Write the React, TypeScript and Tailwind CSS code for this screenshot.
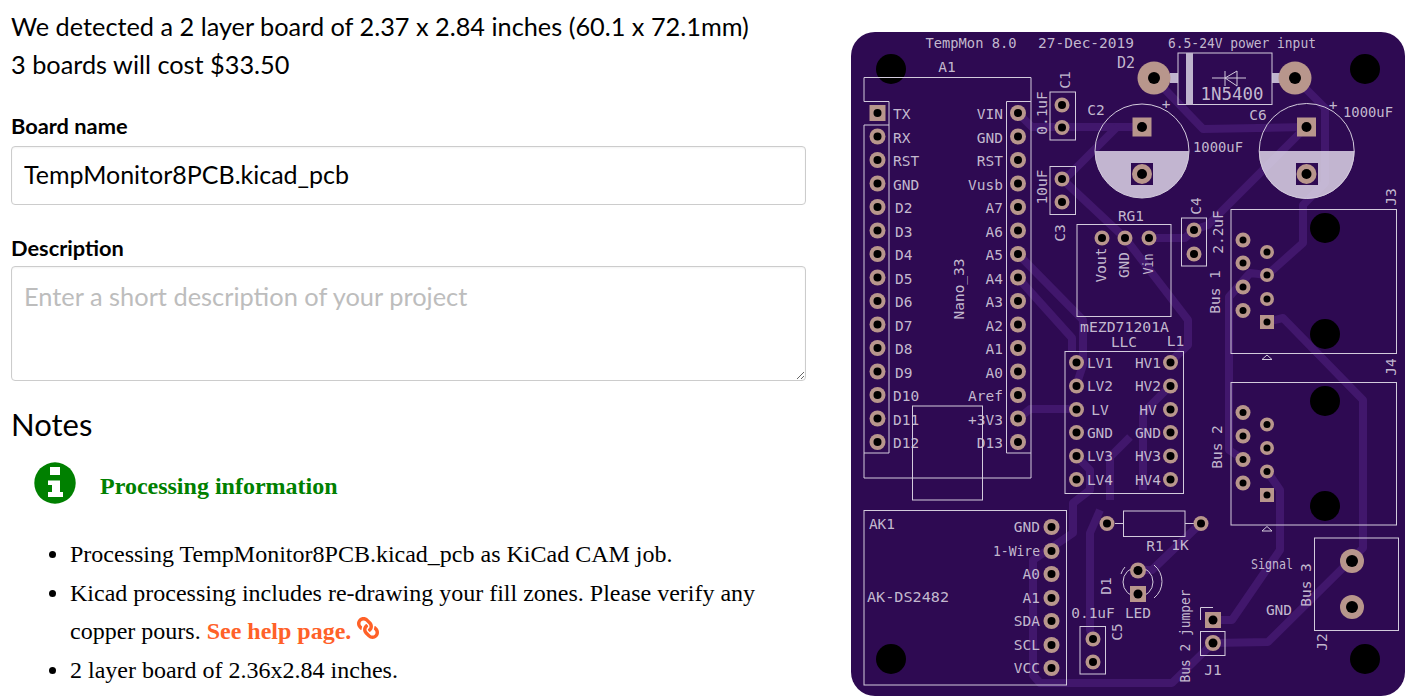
import React from "react";
import { FaLink } from "react-icons/fa";

const SILK = "#d3cbdc";
const PAD = "#b8968c";
const TRACE = "#41176c";
const BG = "#2e0a52";

function T({ x, y, c, a = "middle", r, s = 14.5, w }: { x: number; y: number; c: string; a?: "start" | "middle" | "end"; r?: boolean; s?: number; w?: number }) {
  return (
    <text x={x} y={y} textAnchor={a} dominantBaseline="central" fontSize={s} fill={SILK} fillOpacity={0.92} fontFamily="'DejaVu Sans Mono', monospace" textLength={w} lengthAdjust={w ? "spacingAndGlyphs" : undefined} transform={r ? `rotate(-90 ${x} ${y})` : undefined}>
      {c}
    </text>
  );
}
function P({ x, y, r = 8, h = 4, sq }: { x: number; y: number; r?: number; h?: number; sq?: boolean }) {
  return (
    <g>
      {sq ? <rect x={x - r} y={y - r} width={r * 2} height={r * 2} fill={PAD} /> : <circle cx={x} cy={y} r={r} fill={PAD} />}
      <circle cx={x} cy={y} r={h} fill="#000" />
    </g>
  );
}
function R({ x, y, x2, y2 }: { x: number; y: number; x2: number; y2: number }) {
  return <rect x={x} y={y} width={x2 - x} height={y2 - y} fill="none" stroke={SILK} strokeWidth={1} />;
}
function H({ x, y }: { x: number; y: number }) {
  return <circle cx={x} cy={y} r={15} fill="#000" />;
}

const traces = [
  "1018,113 1032,127 1142,127",
  "1117,127 1070,174 1062,179",
  "1062,179 1125,238",
  "1125,238 1188,320 1188,345 1170,362",
  "1018,254 1083,320 1083,365 1076,386",
  "1018,278 1072,338 1072,351",
  "1018,419 1030,409 1076,409",
  "1154,78 1203,129 1306,127",
  "1306,127 1208,225 1194,230",
  "1149,238 1185,238 1194,230",
  "1295,78 1325,108 1325,183 1303,205 1303,243 1267,275 1250,273 1229,297 1229,450 1243,459",
  "1170,386 1143,413 1143,490",
  "1130,437 1110,457 1110,500",
  "1267,322 1283,318 1363,400 1363,548 1268,642 1213,643 1172,683 1040,683 1033,675 1033,560 1073,533 1073,503 1090,490 1090,470 1076,456",
  "1213,620 1232,620 1280,550 1280,490 1267,471",
  "1201,523 1152,570 1138,570",
  "1100,510 1090,533 1090,630 1093,639",
];

const leftY = Array.from({ length: 15 }, (_, i) => 113 + i * 23.5);
const leftL = ["TX", "RX", "RST", "GND", "D2", "D3", "D4", "D5", "D6", "D7", "D8", "D9", "D10", "D11", "D12"];
const rightL = ["VIN", "GND", "RST", "Vusb", "A7", "A6", "A5", "A4", "A3", "A2", "A1", "A0", "Aref", "+3V3", "D13"];
const llcY = [362.5, 386, 409.5, 432.5, 456, 479.5];
const llcL = ["LV1", "LV2", "LV", "GND", "LV3", "LV4"];
const llcR = ["HV1", "HV2", "HV", "GND", "HV3", "HV4"];
const akY = [527, 551, 574, 598, 621, 645, 668];
const akL = ["GND", "1-Wire", "A0", "A1", "SDA", "SCL", "VCC"];

function Board() {
  return (
    <svg width={554} height={664} viewBox="851 32 554 664" className="block">
      <rect x={851} y={32} width={554} height={664} rx={24} fill={BG} />
      {traces.map((t) => (
        <polyline key={t} points={t} fill="none" stroke={TRACE} strokeWidth={8} strokeLinejoin="round" />
      ))}
      <H x={891} y={69} />
      <H x={1365} y={69} />
      <H x={891} y={659} />
      <H x={1365} y={659} />
      <H x={1325} y={228} />
      <H x={1325} y={334} />
      <H x={1325} y={401} />
      <H x={1325} y={506} />

      <T x={971} y={43} c="TempMon 8.0" w={91} />
      <T x={1086} y={43} c="27-Dec-2019" w={96} />
      <T x={1242} y={43} c="6.5-24V power input" w={148} />
      <T x={947} y={67} c="A1" />
      <T x={1126} y={63} c="D2" s={15} />

      <path d="M864 125V453M864 101.5V77.5H1031V478H864V453H889V101.5H864M864 125H889M1006.5 101.5H1031M1006.5 101.5V453H1031" fill="none" stroke={SILK} strokeWidth={1} />
      <R x={912.5} y={406} x2={982.5} y2={500} />
      {leftY.map((y, i) => (
        <g key={i}>
          <P x={877.5} y={y} sq={i === 0} />
          <P x={1018} y={y} />
          <T x={i > 3 && i < 12 ? 895 : 893} y={y + 1} c={leftL[i]} a="start" />
          <T x={1003} y={y + 1} c={rightL[i]} a="end" />
        </g>
      ))}
      <T x={959} y={289} c="Nano_33" r />

      <R x={1050} y={92} x2={1075.5} y2={140} />
      <R x={1050} y={166.5} x2={1075.5} y2={214.5} />
      <P x={1062} y={105} r={7.5} />
      <P x={1062} y={127.5} r={7.5} />
      <P x={1062} y={179} r={7.5} />
      <P x={1062} y={202} r={7.5} />
      <T x={1065} y={80} c="C1" r />
      <T x={1042} y={113} c="0.1uF" r />
      <T x={1042} y={187} c="10uF" r />
      <T x={1060} y={233} c="C3" r />

      <path d="M1189 151A47 47 0 0 1 1095 151Z" fill="#dcd4e6" fillOpacity={0.85} />
      <circle cx={1142} cy={151} r={47} fill="none" stroke={SILK} strokeWidth={1} />
      <path d="M1354.5 151A47.5 47.5 0 0 1 1259 151Z" fill="#dcd4e6" fillOpacity={0.85} />
      <circle cx={1306.7} cy={151} r={47.5} fill="none" stroke={SILK} strokeWidth={1} />
      <rect x={1131} y={163} width={22} height={22} fill={BG} />
      <rect x={1296} y={163} width={22} height={22} fill={BG} />
      <P x={1142} y={127} r={9.5} h={5} sq />
      <P x={1142} y={174} r={10} h={5} />
      <P x={1306.5} y={127} r={9.5} h={5} sq />
      <P x={1306.5} y={174} r={10} h={5} />
      <T x={1096} y={110} c="C2" />
      <T x={1258} y={115} c="C6" />
      <T x={1166} y={104} c="+" />
      <T x={1333} y={105} c="+" />
      <T x={1218} y={147} c="1000uF" w={50} />
      <T x={1368} y={112} c="1000uF" w={50} />

      <rect x={1170} y={73} width={8} height={10} fill="#bfb4cd" />
      <rect x={1272} y={73} width={8} height={10} fill="#bfb4cd" />
      <R x={1178} y={53} x2={1272} y2={104.5} />
      <rect x={1186} y={53} width={7} height={51.5} fill="#bfb4cd" />
      <path d="M1212 78H1246M1225 71V86M1225 78L1237 71V86Z" fill="none" stroke={SILK} strokeWidth={1} />
      <T x={1232} y={94} c="1N5400" s={17} w={63} />
      <P x={1154} y={78} r={16.5} h={6} />
      <P x={1295} y={78} r={16.5} h={6} />

      <R x={1077} y={224.5} x2={1171} y2={316.5} />
      <P x={1102} y={238} r={7.5} />
      <P x={1125} y={238} r={7.5} />
      <P x={1149} y={238} r={7.5} />
      <T x={1101} y={265} c="Vout" r />
      <T x={1124} y={265} c="GND" r />
      <T x={1148} y={264} c="Vin" r w={21} />
      <T x={1131} y={216} c="RG1" />
      <T x={1124.5} y={327} c="mEZD71201A" w={89} />
      <T x={1124} y={342} c="LLC" />
      <T x={1175.5} y={341} c="L1" />

      <R x={1181.5} y={218} x2={1206.5} y2={266} />
      <P x={1194} y={230} r={7.5} />
      <P x={1194} y={254} r={7.5} />
      <T x={1196} y={206} c="C4" r />
      <T x={1218} y={232} c="2.2uF" r />

      <R x={1065} y={351.5} x2={1183.5} y2={493.5} />
      {llcY.map((y, i) => (
        <g key={i}>
          <P x={1076.5} y={y} r={7.5} />
          <P x={1170.5} y={y} r={7.5} />
          <T x={1100} y={y} c={llcL[i]} />
          <T x={1148} y={y} c={llcR[i]} />
        </g>
      ))}

      <R x={1231} y={209.5} x2={1396.5} y2={353.5} />
      <R x={1231} y={382.5} x2={1396.5} y2={525} />
      {[240, 263, 287, 310.5].map((y) => <P key={y} x={1243} y={y} r={7.5} h={3.5} />)}
      {[252, 275, 299].map((y) => <P key={y} x={1267} y={y} r={7} h={3.5} />)}
      <P x={1267} y={322} r={7} h={3.5} sq />
      {[412.5, 436, 459.5, 483].map((y) => <P key={y} x={1243} y={y} r={7.5} h={3.5} />)}
      {[424.5, 448, 471.5].map((y) => <P key={y} x={1267} y={y} r={7} h={3.5} />)}
      <P x={1267} y={495} r={7} h={3.5} sq />
      <path d="M1262 359.5H1272L1267 355ZM1262 531H1272L1267 526.5Z" fill="none" stroke={SILK} strokeWidth={1} />
      <T x={1391} y={197} c="J3" r />
      <T x={1391} y={367} c="J4" r />
      <T x={1215} y={292} c="Bus 1" r />
      <T x={1217} y={447} c="Bus 2" r />

      <R x={864} y={510.5} x2={1066.5} y2={685} />
      {akY.map((y, i) => (
        <g key={i}>
          <P x={1051.5} y={y} />
          <T x={1040} y={y} c={akL[i]} a="end" w={i === 1 ? 47 : undefined} />
        </g>
      ))}
      <T x={882} y={524} c="AK1" />
      <T x={908} y={597} c="AK-DS2482" w={82} />

      <path d="M1115 523.5H1124M1185 523.5H1194" stroke={SILK} strokeWidth={1} />
      <R x={1123.5} y={511} x2={1185} y2={536.5} />
      <P x={1107} y={523.5} r={7.5} />
      <P x={1201} y={523.5} r={7.5} />
      <T x={1155} y={546} c="R1" />
      <T x={1180} y={545} c="1K" />

      <path d="M1121 574A18 18 0 0 1 1125 567M1154 565A21 21 0 0 1 1154 598" fill="none" stroke={SILK} strokeWidth={1} />
      <circle cx={1138} cy={582} r={15} fill="none" stroke={SILK} strokeWidth={1} />
      <P x={1138} y={570.5} r={8} h={4.5} />
      <P x={1138} y={594} r={8} h={4.5} sq />
      <T x={1106} y={586} c="D1" r />
      <T x={1138} y={613} c="LED" />

      <R x={1080} y={626.5} x2={1105.5} y2={674} />
      <P x={1093} y={639} r={7.5} />
      <P x={1093} y={662} r={7.5} />
      <T x={1093} y={613} c="0.1uF" />
      <T x={1117} y={632} c="C5" r />

      <R x={1314.5} y={538} x2={1398.5} y2={630.5} />
      <P x={1352} y={561} r={12} h={6} />
      <P x={1352} y={607} r={12} h={6} />
      <T x={1272} y={564} c="Signal" w={42} />
      <T x={1279} y={610} c="GND" />
      <T x={1306} y={585} c="Bus 3" r />
      <T x={1322} y={642} c="J2" r />

      <path d="M1200.5 620V607.5H1213" fill="none" stroke={SILK} strokeWidth={1} />
      <R x={1200.5} y={631.5} x2={1225} y2={655.5} />
      <P x={1213} y={620} r={8} h={4.5} sq />
      <P x={1213} y={643} r={8} h={4.5} />
      <T x={1213} y={670} c="J1" />
      <T x={1185} y={636} c="Bus 2 jumper" r w={93} />
    </svg>
  );
}

function InfoIcon() {
  return (
    <svg width={42} height={42} viewBox="0 0 42 42" className="shrink-0">
      <circle cx={21} cy={21} r={20.7} fill="#008000" />
      <path d="M16 5H26V13H16ZM14 18.5H26V30H29V35H14V30H18V23H14Z" fill="#fff" />
    </svg>
  );
}

export default function App() {
  return (
    <div className="flex h-[696px] w-[1405px] overflow-hidden bg-white text-black">
      <div className="w-[806px] shrink-0 pl-[11px] font-['Lato',sans-serif]">
        <p className="pt-[7px] text-[25.3px] leading-[38px]">We detected a 2 layer board of 2.37 x 2.84 inches (60.1 x 72.1mm)</p>
        <p className="text-[25.3px] leading-[38px]">3 boards will cost $33.50</p>
        <label className="mt-[29px] block text-[21.8px] font-bold leading-[28px]">Board name</label>
        <input readOnly value="TempMonitor8PCB.kicad_pcb" className="mt-[6px] block h-[59px] w-full rounded-[4px] border border-[#ccc] px-[12px] pb-[3px] text-[25px] shadow-[inset_0_1px_2px_rgba(0,0,0,0.05)] outline-none" />
        <label className="mt-[29px] block text-[21.8px] font-bold leading-[28px]">Description</label>
        <textarea placeholder="Enter a short description of your project" className="mt-[4px] block h-[115px] w-full rounded-[4px] border border-[#ccc] px-[12px] py-[10px] text-[25.4px] shadow-[inset_0_1px_2px_rgba(0,0,0,0.05)] outline-none placeholder:text-[#bdbdbd]" />
        <h2 className="mt-[23px] text-[31px] font-normal leading-[40px]">Notes</h2>
        <div className="mt-[17px] flex items-center pl-[23px]">
          <InfoIcon />
          <span className="ml-[24px] pt-[7px] font-['Liberation_Serif',serif] text-[24px] font-bold text-[#008000]">Processing information</span>
        </div>
        <ul className="mt-[31px] list-disc pl-[59px] font-['Liberation_Serif',serif] text-[24px] leading-[38.5px]">
          <li>Processing TempMonitor8PCB.kicad_pcb as KiCad CAM job.</li>
          <li>
            Kicad processing includes re-drawing your fill zones. Please verify any copper pours.{" "}
            <span className="font-bold text-[#ff6128]">See help page.</span>{" "}
            <FaLink className="inline -scale-x-100 align-baseline text-[#ff6128]" size={22} />
          </li>
          <li>2 layer board of 2.36x2.84 inches.</li>
        </ul>
      </div>
      <div className="ml-[45px] shrink-0 pt-[32px]">
        <Board />
      </div>
    </div>
  );
}
